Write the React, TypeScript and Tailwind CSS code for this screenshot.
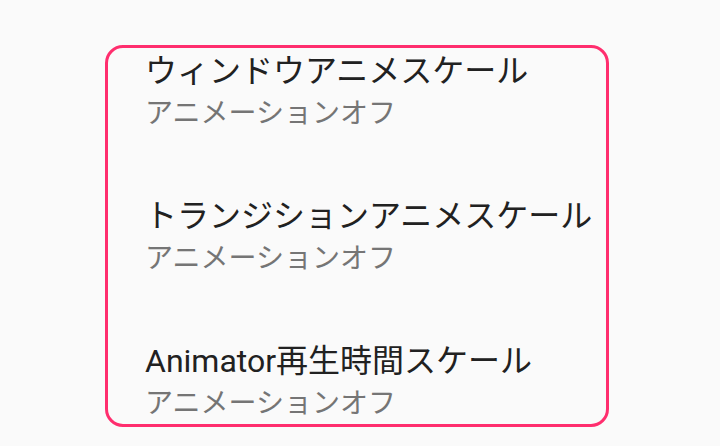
import React from "react";

const rows = [
  { title: "ウィンドウアニメスケール", summary: "アニメーションオフ" },
  { title: "トランジションアニメスケール", summary: "アニメーションオフ" },
  { title: "Animator再生時間スケール", summary: "アニメーションオフ" },
];

const App = () => {
  return (
    <div
      className="w-[720px] h-[446px] bg-[#fafafa] pt-[45px] pl-[105px]"
      style={{ fontFamily: "Roboto, 'Noto Sans CJK JP', sans-serif" }}
    >
      <div className="w-[504px] h-[382px] border-[3px] border-[#ff2e6e] rounded-[18px] pl-[37px] pt-[2px] flex flex-col gap-[62px]">
        {rows.map((row) => (
          <div key={row.title} className="flex flex-col">
            <span className="text-[32px] leading-[42px] text-[#212121]">{row.title}</span>
            <span className="mt-[3px] text-[28px] leading-[38px] text-[#757575]">{row.summary}</span>
          </div>
        ))}
      </div>
    </div>
  );
};

export default App;
